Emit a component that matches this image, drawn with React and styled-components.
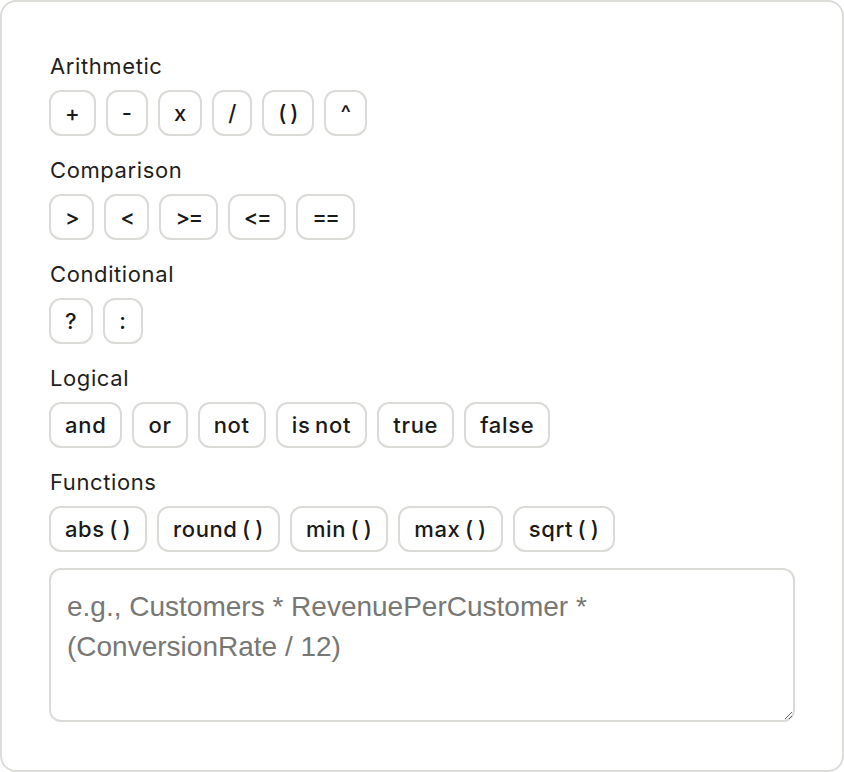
import React from "react";
import styled, { createGlobalStyle } from "styled-components";

const GlobalStyle = createGlobalStyle`
  html, body {
    margin: 0;
    padding: 0;
    background: #ffffff;
  }
  * { box-sizing: border-box; }
`;

const Card = styled.div`
  width: 844px;
  height: 772px;
  border: 2px solid #dcdcd8;
  border-radius: 16px;
  padding: 50px 47px 48px 47px;
  display: flex;
  flex-direction: column;
  gap: 20px;
  background: #fff;
  font-family: Inter, "Liberation Sans", sans-serif;
`;

const Section = styled.section`
  display: flex;
  flex-direction: column;
  gap: 10px;
`;

const Label = styled.div`
  font-size: 22px;
  line-height: 28px;
  letter-spacing: 0.6px;
  color: #1f1f1c;
  padding-left: 1px;
`;

const Row = styled.div`
  display: flex;
  gap: 10px;
`;

const Token = styled.button`
  height: 46px;
  min-width: 40px;
  padding: 0 14px;
  border: 2px solid #dadad6;
  border-radius: 12px;
  background: #fff;
  font-family: Inter, "Liberation Sans", sans-serif;
  font-size: 22px;
  font-weight: 500;
  letter-spacing: ${(p) => p.$tracking || "0"};
  word-spacing: -2px;
  color: #1a1a18;
  display: flex;
  align-items: center;
  justify-content: center;
  cursor: pointer;
`;

const Editor = styled.textarea`
  margin-top: -4px;
  height: 154px;
  width: 100%;
  border: 2px solid #dadad6;
  border-radius: 12px;
  padding: 17px 16px 15px;
  font-family: "Liberation Sans", Arial, sans-serif;
  font-size: 28px;
  line-height: 40px;
  color: #1a1a18;
  resize: vertical;
  outline: none;
  &::placeholder {
    color: #777775;
  }
`;

const groups = [
  { title: "Arithmetic", items: ["+", "-", "x", "/", "( )", "^"] },
  { title: "Comparison", items: [">", "<", ">=", "<=", "=="], tracking: "-1.5px" },
  { title: "Conditional", items: ["?", ":"] },
  { title: "Logical", items: ["and", "or", "not", "is not", "true", "false"], tracking: "0.7px" },
  { title: "Functions", items: ["abs ( )", "round ( )", "min ( )", "max ( )", "sqrt ( )"], tracking: "0.6px" },
];

export default function App() {
  return (
    <>
      <GlobalStyle />
      <Card>
        {groups.map((g) => (
          <Section key={g.title}>
            <Label>{g.title}</Label>
            <Row>
              {g.items.map((t) => (
                <Token key={t} type="button" $tracking={g.tracking}>{t}</Token>
              ))}
            </Row>
          </Section>
        ))}
        <Editor placeholder="e.g., Customers * RevenuePerCustomer * (ConversionRate / 12)" />
      </Card>
    </>
  );
}
